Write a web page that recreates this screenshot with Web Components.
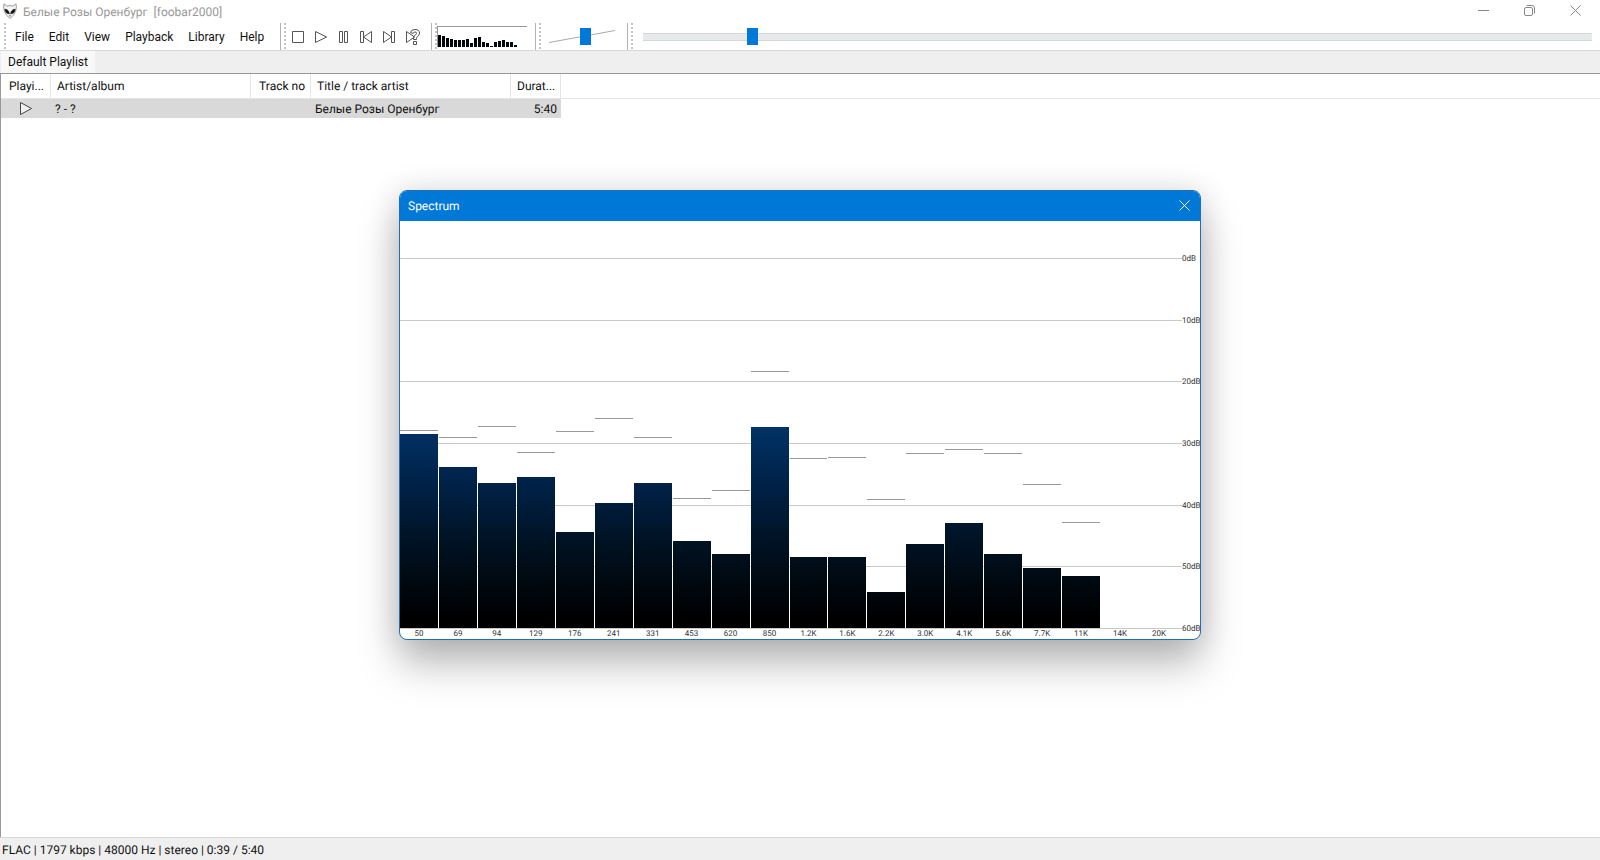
<!DOCTYPE html>
<html lang="en">
<head>
<meta charset="utf-8">
<title>foobar2000</title>
<style>
    html, body {
        height: 100%;
        margin: 0;
    }
    body {
        --accent: #0078d7;
        --line: #d8d8d8;
        --bar: #efefef;
        font-family: Roboto, "Noto Sans", sans-serif;
        font-size: 12px;
        line-height: 16px;
        text-rendering: geometricPrecision;
        color: #111;
        background: #fff;
        overflow: hidden;
    }
</style>
</head>
<body>
<player-window></player-window>

<script>
class TitleBar extends HTMLElement {
    constructor() {
        super();
        this.attachShadow({ mode: 'open' });
    }

    connectedCallback() {
        this.shadowRoot.innerHTML = `
            <style>
                :host {
                    display: flex;
                    align-items: center;
                    height: 23px;
                    padding: 0 2px 0 3px;
                    color: #999;
                    white-space: pre;
                }
                .logo { width: 14px; height: 16px; margin: 0 6px 2px 0; }
                .title { flex: 1; }
                button {
                    width: 46px;
                    height: 20px;
                    margin-bottom: 3px;
                    padding: 0;
                    border: none;
                    background: none;
                }
                button svg { display: block; margin: auto; }
                button path, button rect { fill: none; stroke: #888; }
            </style>
            <svg class="logo" viewBox="0 0 14 16">
                <path d="M1 .8 4 3.2Q7 1.8 10 3.2L13 .8Q13.8 4 12.8 7.5 11.5 12.5 7 15.5 2.5 12.5 1.2 7.5 .2 4 1 .8Z" fill="#f6f6f6" stroke="#999"/>
                <path d="M1.8 6.2Q5.8 6.4 6.4 10.8 2.6 11 1.8 6.2ZM12.2 6.2Q8.2 6.4 7.6 10.8 11.4 11 12.2 6.2Z" fill="#111" stroke="#111" stroke-width=".6"/>
                <path d="M6 12.8h2" stroke="#777"/>
            </svg>
            <span class="title"><slot></slot></span>
            <button aria-label="Minimize"><svg width="11" height="11"><path d="M0 5.5h11"/></svg></button>
            <button aria-label="Restore"><svg width="11" height="11"><rect x=".5" y="2.5" width="8" height="8" rx="1.5"/><path d="M2.5 .5h5.5q2.5 0 2.5 2.5v5.5"/></svg></button>
            <button aria-label="Close"><svg width="11" height="11"><path d="M.5 .5l10 10M10.5 .5l-10 10"/></svg></button>
        `;
    }
}

// One band of the toolbar: dotted grip, content, closing line
class ToolBand extends HTMLElement {
    constructor() {
        super();
        this.attachShadow({ mode: 'open' });
    }

    connectedCallback() {
        this.shadowRoot.innerHTML = `
            <style>
                :host {
                    display: flex;
                    align-items: center;
                    height: 27px;
                    border-right: 1px solid #b4b4b4;
                }
                :host([last]) { flex: 1; border: none; }
                .grip {
                    align-self: stretch;
                    width: 2px;
                    margin-left: 3px;
                    background: repeating-linear-gradient(#c4c4c4 0 2px, #fff 2px 4px);
                }
            </style>
            <span class="grip"></span>
            <slot></slot>
        `;
    }
}

class MenuBar extends HTMLElement {
    constructor() {
        super();
        this.attachShadow({ mode: 'open' });
    }

    connectedCallback() {
        const items = this.getAttribute('items').split(' ');
        this.shadowRoot.innerHTML = `
            <style>
                :host { display: flex; padding: 0 8px 0 2px; }
                button {
                    padding: 4px 8px 4px 7px;
                    border: none;
                    background: none;
                    font: inherit;
                    color: inherit;
                }
            </style>
            ${items.map(item => `<button>${item}</button>`).join('')}
        `;
    }
}

class PlaybackButtons extends HTMLElement {
    constructor() {
        super();
        this.attachShadow({ mode: 'open' });
    }

    connectedCallback() {
        const icons = {
            Stop: '<path d="M6.5 8.5h11v11h-11z"/>',
            Play: '<path d="M6.5 8.5v11l11-5.5z"/>',
            Pause: '<path d="M7.5 8.5h3v11h-3zM12.5 8.5h3v11h-3z"/>',
            Previous: '<path d="M5.5 8.5h3v11h-3zM16.5 8.5v11l-8-5.5z"/>',
            Next: '<path d="M5.5 8.5v11l8-5.5zM13.5 8.5h3v11h-3z"/>',
            Random: '<path d="M5.5 8.5v11l8-5.5z"/><path fill="#fff" d="M9.5 9.5Q10 6.5 14 6.5 18.5 6.5 18.5 10 18.5 12.2 16.8 13.2 15.5 14 15.5 15.5v1h-3v-1.5Q12.5 13 14.2 12.1 15.5 11.4 15.5 10.2 15.5 9 14 9 12.5 9 12.2 10.5ZM12.5 18.5h3v3h-3z"/>'
        };
        this.shadowRoot.innerHTML = `
            <style>
                :host { display: flex; padding-right: 7px; }
                button { width: 23px; height: 27px; padding: 0; border: none; background: none; }
                svg { display: block; }
                path { fill: none; stroke: #555; }
            </style>
            ${Object.entries(icons).map(([name, shape]) => `
                <button aria-label="${name}"><svg width="23" height="27">${shape}</svg></button>
            `).join('')}
        `;
    }
}

class MiniSpectrum extends HTMLElement {
    constructor() {
        super();
        this.attachShadow({ mode: 'open' });
    }

    connectedCallback() {
        const bars = this.getAttribute('levels').split(' ');
        this.shadowRoot.innerHTML = `
            <style>
                :host {
                    display: flex;
                    align-items: flex-end;
                    gap: 1px;
                    box-sizing: border-box;
                    width: 90px;
                    height: 21px;
                    margin-right: 8px;
                    border: solid #999;
                    border-width: 1px 0 0 1px;
                }
                i { width: 3px; background: linear-gradient(to top, #000814 2px, #000 8px); }
            </style>
            ${bars.map(h => `<i style="height: ${h}px"></i>`).join('')}
        `;
    }
}

class RangeSlider extends HTMLElement {
    constructor() {
        super();
        this.attachShadow({ mode: 'open' });
    }

    connectedCallback() {
        const label = this.getAttribute('label');
        this.shadowRoot.innerHTML = `
            <style>
                :host { display: grid; align-items: center; width: 66px; margin: 0 12px 0 8px; }
                :host([wide]) { flex: 1; width: auto; margin: 0 8px 0 10px; }
                input, svg { grid-area: 1 / 1; }
                input {
                    appearance: none;
                    width: 100%;
                    height: 17px;
                    margin: 0;
                    background: none;
                }
                input::-webkit-slider-thumb {
                    appearance: none;
                    width: 11px;
                    height: 17px;
                    background: var(--accent);
                }
                :host([wide]) input {
                    background: linear-gradient(#d6d6d6 1px, #e7eaea 1px 7px, #d6d6d6 7px) center / 100% 8px no-repeat;
                }
                svg { width: 66px; height: 17px; }
                :host([wide]) svg { display: none; }
            </style>
            <svg><path d="M0 14.5 66 2.5" stroke="#aaa"/></svg>
            <input type="range" aria-label="${label}" max="1000" value="${this.getAttribute('value')}">
        `;
    }
}

class PlaylistTabs extends HTMLElement {
    constructor() {
        super();
        this.attachShadow({ mode: 'open' });
    }

    connectedCallback() {
        this.shadowRoot.innerHTML = `
            <style>
                :host {
                    display: flex;
                    height: 22px;
                    border-top: 1px solid var(--line);
                    border-bottom: 1px solid #999;
                    background: var(--bar);
                }
                button {
                    margin-left: 1px;
                    padding: 0 7px;
                    border: none;
                    background: #f8f8f8;
                    font: inherit;
                    color: inherit;
                }
            </style>
            <button><slot></slot></button>
        `;
    }
}

class TrackList extends HTMLElement {
    constructor() {
        super();
        this.attachShadow({ mode: 'open' });
    }

    connectedCallback() {
        this.shadowRoot.innerHTML = `
            <style>
                :host { display: block; flex: 1; border-left: 1px solid #999; }
                table { width: 100%; table-layout: fixed; border-collapse: separate; border-spacing: 0; }
                .w50 { width: 50px; }
                .w60 { width: 60px; }
                .w200 { width: 200px; }
                th, td {
                    box-sizing: border-box;
                    padding: 0 4px;
                    text-align: left;
                    font-weight: normal;
                    white-space: nowrap;
                    overflow: hidden;
                }
                th {
                    height: 25px;
                    padding: 0 5px 0 6px;
                    border-right: 1px solid #e5e5e5;
                    border-bottom: 1px solid #e5e5e5;
                }
                th:first-child { padding-left: 8px; }
                th:last-child { border-right: none; }
                td { height: 19px; background: #d9d9d9; }
                td:last-child { background: none; }
                .num { text-align: right; }
                td svg { display: block; margin-left: 14px; }
            </style>
            <table>
                <colgroup>
                    <col class="w50"><col class="w200"><col class="w60"><col class="w200"><col class="w50"><col>
                </colgroup>
                <thead>
                    <tr><th>Playi...</th><th>Artist/album</th><th class="num">Track no</th><th>Title / track artist</th><th>Durat...</th><th></th></tr>
                </thead>
                <tbody>
                    <tr>
                        <td><svg width="14" height="13"><path d="M1.5 .5v12l11-6z" fill="#f2f2f2" stroke="#444"/></svg></td>
                        <td>? - ?</td><td class="num"></td><td>Белые Розы Оренбург</td><td class="num">5:40</td><td></td>
                    </tr>
                </tbody>
            </table>
        `;
    }
}

class StatusBar extends HTMLElement {
    constructor() {
        super();
        this.attachShadow({ mode: 'open' });
    }

    connectedCallback() {
        this.shadowRoot.innerHTML = `
            <style>
                :host {
                    display: block;
                    padding: 4px 2px 2px;
                    border-top: 1px solid var(--line);
                    background: var(--bar);
                }
            </style>
            <slot></slot>
        `;
    }
}

class SpectrumChart extends HTMLElement {
    constructor() {
        super();
        this.attachShadow({ mode: 'open' });
        // label, level, peak; both counted up from the -60dB floor, 370 = 0dB
        this.range = 370;
        this.bands = [
            ['50', 194, 198], ['69', 161, 191], ['94', 145, 202], ['129', 151, 176],
            ['176', 96, 197], ['241', 125, 210], ['331', 145, 191], ['453', 87, 130],
            ['620', 74, 138], ['850', 201, 257], ['1.2K', 71, 170], ['1.6K', 71, 171],
            ['2.2K', 36, 129], ['3.0K', 84, 175], ['4.1K', 105, 179], ['5.6K', 74, 175],
            ['7.7K', 60, 144], ['11K', 52, 106], ['14K', 0, 0], ['20K', 0, 0]
        ];
    }

    connectedCallback() {
        const pct = v => (v / this.range * 100).toFixed(2) + '%';
        const scale = [0, 10, 20, 30, 40, 50, 60];
        this.shadowRoot.innerHTML = `
            <style>
                :host {
                    display: flex;
                    flex-direction: column;
                    flex: 1;
                    padding-top: 37px;
                    font-size: 8px;
                    line-height: 11px;
                    color: #333;
                }
                .plot { display: grid; flex: 1; }
                .scale, .bands { grid-area: 1 / 1; }
                .scale {
                    display: flex;
                    flex-direction: column;
                    justify-content: space-between;
                    margin: -5px 0 -6px;
                }
                .scale div { display: flex; align-items: center; }
                .scale div::before { content: ""; flex: 1; height: 1px; background: #c8c8c8; }
                .scale span { width: 18px; white-space: nowrap; }
                .bands, .labels {
                    display: grid;
                    grid-template-columns: repeat(20, 1fr);
                    gap: 1px;
                    margin-right: 22px;
                }
                .band { position: relative; }
                .band i, .band b { position: absolute; left: 0; right: 0; }
                .band i {
                    bottom: 0;
                    background: linear-gradient(to top, #000 10px, #001120 80px, #002248 145px, #003265 200px);
                }
                .band b { height: 1px; background: #999; }
                .labels { padding-top: 1px; line-height: 10px; text-align: center; }
            </style>
            <div class="plot">
                <div class="scale">${scale.map(db => `<div><span>${db}dB</span></div>`).join('')}</div>
                <div class="bands">
                    ${this.bands.map(([, level, peak]) => `
                        <div class="band">${level ? `<b style="bottom: ${pct(peak - 1)}"></b><i style="height: ${pct(level)}"></i>` : ''}</div>
                    `).join('')}
                </div>
            </div>
            <div class="labels">${this.bands.map(([label]) => `<span>${label}</span>`).join('')}</div>
        `;
    }
}

class PopupWindow extends HTMLElement {
    constructor() {
        super();
        this.attachShadow({ mode: 'open' });
    }

    connectedCallback() {
        this.shadowRoot.innerHTML = `
            <style>
                :host {
                    display: flex;
                    flex-direction: column;
                    box-sizing: border-box;
                    border: 1px solid #1b70b8;
                    border-radius: 8px;
                    background: #fff;
                    box-shadow: 0 24px 42px rgba(0, 0, 0, .27), 0 0 32px rgba(0, 0, 0, .12);
                    overflow: hidden;
                }
                header {
                    display: flex;
                    align-items: center;
                    justify-content: space-between;
                    height: 30px;
                    padding: 0 10px 0 8px;
                    background: var(--accent);
                    color: #fff;
                }
                button { padding: 0 0 2px; border: none; background: none; }
                svg { display: block; }
                path { stroke: #fff; }
            </style>
            <header>
                <span>${this.getAttribute('heading')}</span>
                <button aria-label="Close"><svg width="11" height="11"><path d="M.5 .5l10 10M10.5 .5l-10 10"/></svg></button>
            </header>
            <slot></slot>
        `;
        this.shadowRoot.querySelector('button').addEventListener('click', () => this.remove());
    }
}

class PlayerWindow extends HTMLElement {
    constructor() {
        super();
        this.attachShadow({ mode: 'open' });
    }

    connectedCallback() {
        this.shadowRoot.innerHTML = `
            <style>
                :host { display: flex; flex-direction: column; height: 100%; }
                .toolbar { display: flex; padding-left: 1px; }
                popup-window {
                    position: absolute;
                    top: 190px;
                    left: 25%;
                    right: 25%;
                    height: 450px;
                    margin: 0 -1px;
                }
            </style>
            <title-bar>Белые Розы Оренбург  [foobar2000]</title-bar>
            <div class="toolbar">
                <tool-band><menu-bar items="File Edit View Playback Library Help"></menu-bar></tool-band>
                <tool-band><playback-buttons></playback-buttons></tool-band>
                <tool-band><mini-spectrum levels="12 11 9 8 7 7 7 8 4 9 10 5 4 1 5 6 7 5 5 2"></mini-spectrum></tool-band>
                <tool-band><range-slider label="Volume" value="564"></range-slider></tool-band>
                <tool-band last><range-slider wide label="Seek" value="111"></range-slider></tool-band>
            </div>
            <playlist-tabs>Default Playlist</playlist-tabs>
            <track-list></track-list>
            <status-bar>FLAC | 1797 kbps | 48000 Hz | stereo | 0:39 / 5:40</status-bar>
            <popup-window heading="Spectrum"><spectrum-chart></spectrum-chart></popup-window>
        `;
    }
}

customElements.define('title-bar', TitleBar);
customElements.define('tool-band', ToolBand);
customElements.define('menu-bar', MenuBar);
customElements.define('playback-buttons', PlaybackButtons);
customElements.define('mini-spectrum', MiniSpectrum);
customElements.define('range-slider', RangeSlider);
customElements.define('playlist-tabs', PlaylistTabs);
customElements.define('track-list', TrackList);
customElements.define('status-bar', StatusBar);
customElements.define('spectrum-chart', SpectrumChart);
customElements.define('popup-window', PopupWindow);
customElements.define('player-window', PlayerWindow);
</script>
</body>
</html>
